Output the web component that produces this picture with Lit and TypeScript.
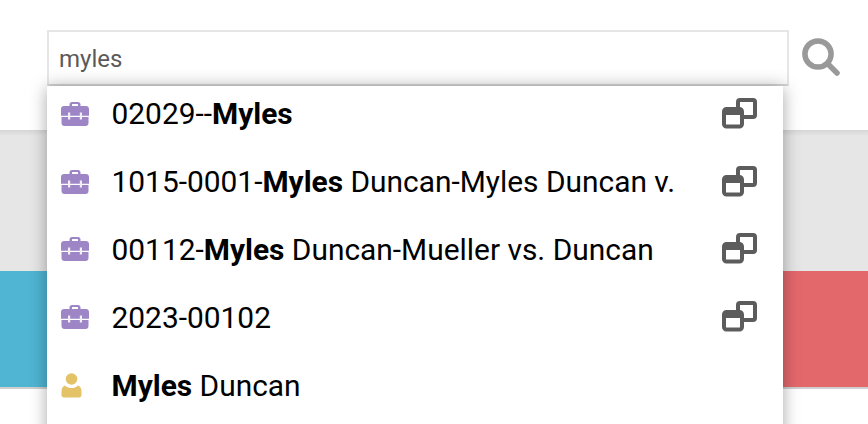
import { LitElement, html, css, svg } from "lit";
import { customElement } from "lit/decorators.js";

interface Result {
  kind: "matter" | "contact";
  before: string;
  bold: string;
  after: string;
}

const RESULTS: Result[] = [
  { kind: "matter", before: "02029--", bold: "Myles", after: "" },
  { kind: "matter", before: "1015-0001-", bold: "Myles", after: " Duncan-Myles Duncan v." },
  { kind: "matter", before: "00112-", bold: "Myles", after: " Duncan-Mueller vs. Duncan" },
  { kind: "matter", before: "2023-00102", bold: "", after: "" },
  { kind: "contact", before: "", bold: "Myles", after: " Duncan" },
];

const briefcase = svg`<svg width="28" height="24" viewBox="0 0 28 24">
  <path fill="#9d85c6" fill-rule="evenodd" d="M8.500 4V2.500C8.500 1 9.500 0 11 0h6c1.500 0 2.500 1 2.500 2.500V4H25c1.700 0 3 1.200 3 3v6.800H0V7c0-1.800 1.300-3 3-3zM11 4h6V2.500c0-.3-.2-.5-.5-.5h-5c-.3 0-.5.2-.5.5z"/>
  <path fill="#9d85c6" d="M.5 15h27v6c0 1.700-1.200 3-3 3h-21c-1.800 0-3-1.300-3-3z"/>
  <path fill="#f3eff9" d="M7 10.500h2.200v7H7zM18.800 10.500H21v7h-2.200z"/>
</svg>`;

const person = svg`<svg width="28" height="26" viewBox="0 -1 28 26">
  <circle cx="10.500" cy="6" r="5.800" fill="#e3c268"/>
  <path fill="#e3c268" d="M4 12.500C6 14.500 8 15 10.500 15S15 14.500 17 12.500C19 13 20.500 15.500 20.500 18.500v3.500c0 1.500-1 2.500-2.500 2.500H3C1.500 24.500.5 23.500.5 22v-3.500C.5 15.500 2 13 4 12.500z"/>
</svg>`;

const openNew = svg`<svg width="36" height="32" viewBox="0 0 36 32">
  <rect x="16" y="2" width="17" height="17" rx="2" fill="none" stroke="#5c5c5c" stroke-width="4"/>
  <rect x="2" y="11" width="18" height="17.500" rx="2.500" fill="#fff" stroke="#5c5c5c" stroke-width="4"/>
  <path fill="#5c5c5c" d="M2 11h18v6H2z"/>
</svg>`;

@customElement("app-root")
export class AppRoot extends LitElement {
  render() {
    return html`
      <header class="top">
        <div class="search">
          <div class="input">myles</div>
          <svg class="glass" width="40" height="40" viewBox="0 0 40 40">
            <circle cx="17" cy="16" r="13.100" fill="none" stroke="#999" stroke-width="5.500"/>
            <path d="M27 26l9 9" stroke="#999" stroke-width="5.500" stroke-linecap="round"/>
          </svg>
          <ul class="menu">
            ${RESULTS.map(
              (r) => html`
                <li>
                  <span class="icon">${r.kind === "matter" ? briefcase : person}</span>
                  <span class="label">${r.before}<b>${r.bold}</b>${r.after}</span>
                  ${r.kind === "matter" ? html`<span class="open">${openNew}</span>` : ""}
                </li>
              `,
            )}
          </ul>
        </div>
      </header>
      <div class="band"></div>
      <div class="cards">
        <div class="blue"></div>
        <div class="red"></div>
      </div>
      <div class="rest"></div>
    `;
  }

  static styles = css`
    :host {
      display: block;
      height: 424px;
      overflow: hidden;
      background: #fff;
      font-family: Roboto, "Liberation Sans", sans-serif;
    }

    .top {
      height: 130px;
      padding: 30px 0 0 47px;
      box-sizing: border-box;
      background: #fff;
    }

    .search {
      position: relative;
      display: flex;
      gap: 12px;
      align-items: flex-start;
    }

    .input {
      width: 742px;
      height: 56px;
      box-sizing: border-box;
      border: 2px solid #e6e6e6;
      border-bottom-color: #d4d4d4;
      padding-left: 10px;
      font-size: 24px;
      line-height: 54px;
      color: #5a5a5a;
      background: linear-gradient(#fff 70%, #fbfbfb);
    }

    .glass {
      margin-top: 8px;
    }

    .menu {
      position: absolute;
      top: 56px;
      left: 0;
      width: 736px;
      margin: 0;
      padding: 0 0 40px;
      list-style: none;
      background: #fff;
      box-shadow: 0 2px 16px rgba(0, 0, 0, 0.35);
      z-index: 2;
    }

    li {
      display: flex;
      align-items: center;
      height: 67.800px;
      box-sizing: border-box;
      padding: 0 0 12px 14px;
      font-size: 29.900px;
      color: #000;
    }

    .icon {
      display: flex;
      width: 51px;
      margin-right: -0.500px;
      flex: none;
    }

    .label {
      flex: 1;
      white-space: nowrap;
    }

    .open {
      display: flex;
      margin-right: 25px;
    }

    .band {
      height: 141px;
      background: linear-gradient(#d6d6d6, #e6e6e6 6px);
    }

    .cards {
      display: flex;
      justify-content: space-between;
      height: 116px;
      border-bottom: 2px solid #cfcfcf;
    }

    .blue {
      width: 200px;
      background: #4fb5d3;
    }

    .red {
      width: 200px;
      background: #e3686c;
    }

    .rest {
      height: 40px;
      background: #fff;
    }
  `;
}
